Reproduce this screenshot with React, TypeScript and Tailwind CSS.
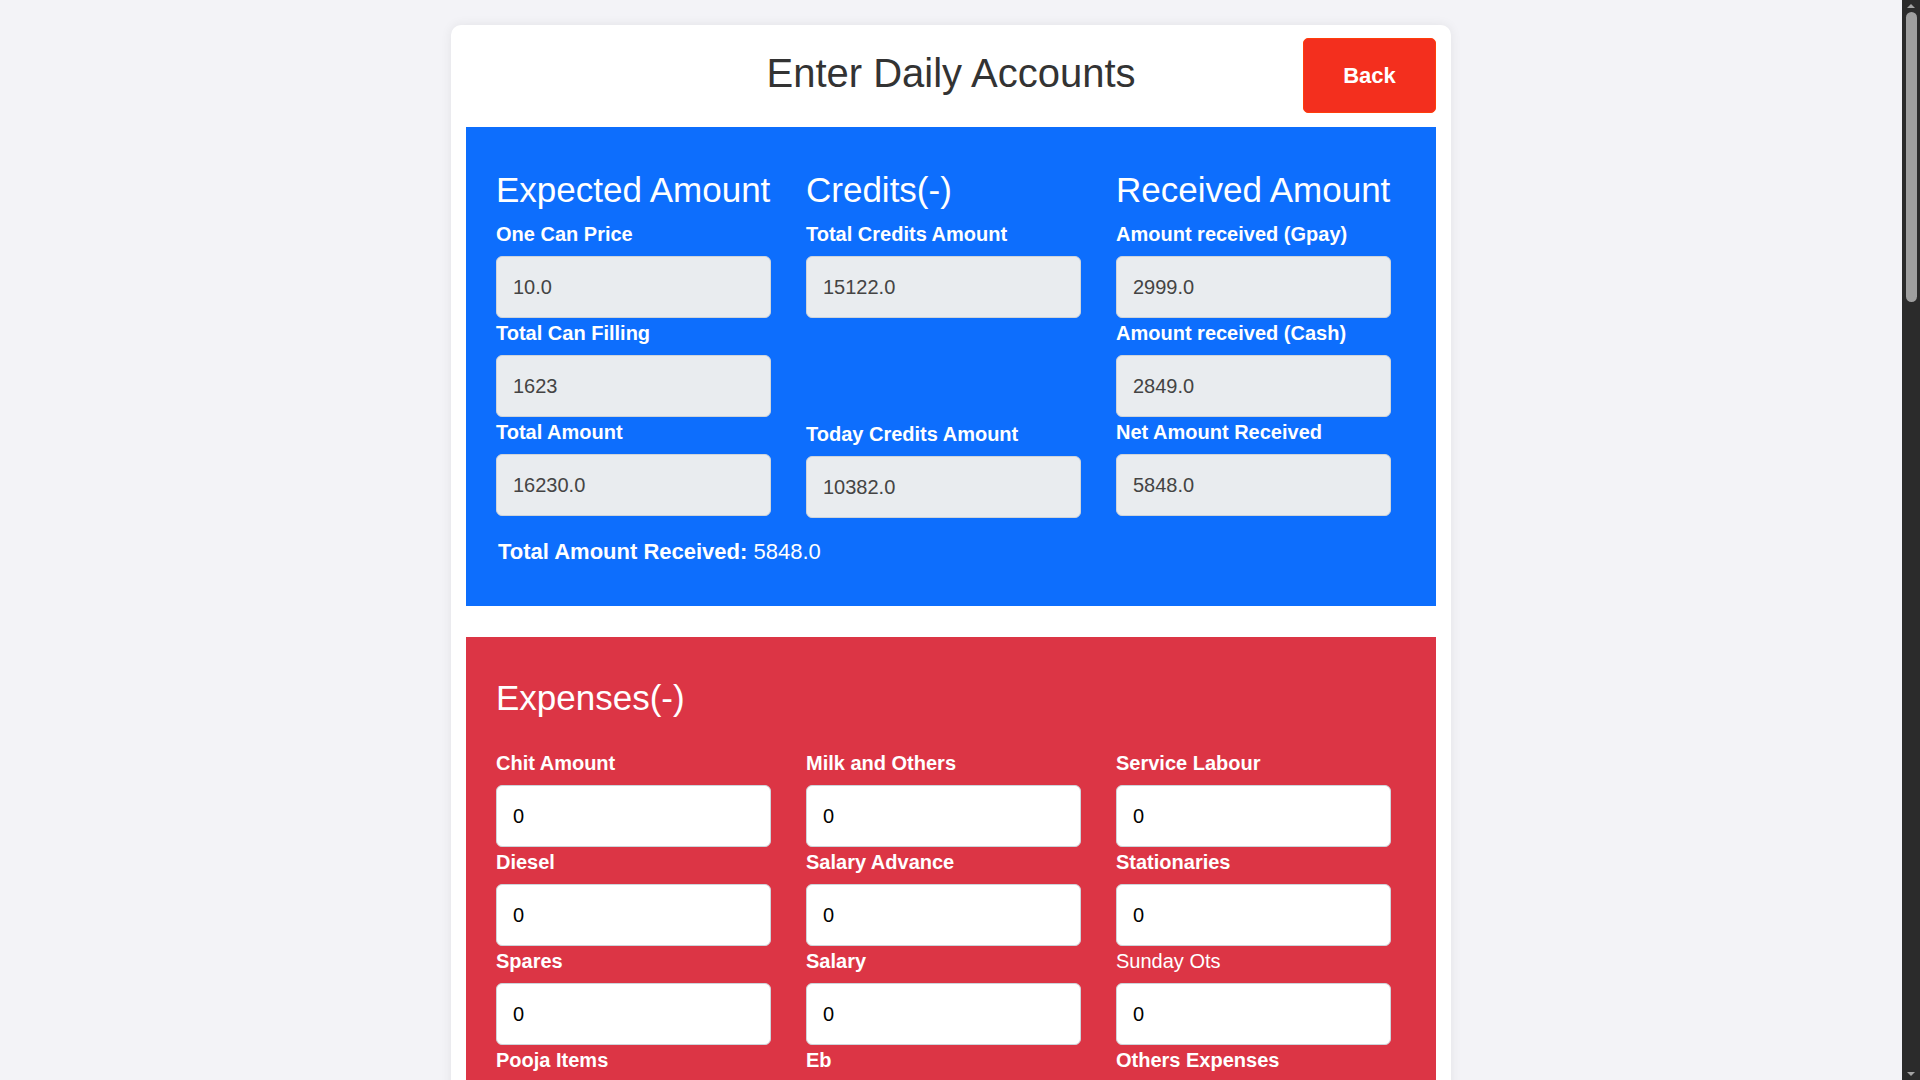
// Daily accounts entry form — expected / credits / received, then expenses.

type Field = { label: string; value: string; plain?: boolean };

const labelCls = "block text-[20px] leading-[30px] font-bold text-white mb-[7px]";
const readOnlyCls =
  "block w-full h-[62px] rounded-[6px] border border-[#ced4da] bg-[#e9ecef] px-4 text-[20px] text-[#444] outline-none";
const editCls =
  "block w-full h-[62px] rounded-[6px] border border-[#ced4da] bg-white px-4 text-[20px] text-black outline-none";

function ReadField({ label, value }: Field) {
  return (
    <div>
      <label className={labelCls}>{label}</label>
      <input className={readOnlyCls} value={value} readOnly />
    </div>
  );
}

function EditField({ label, value, plain }: Field) {
  return (
    <div>
      <label
        className={
          plain
            ? "block text-[20px] leading-[30px] font-normal text-white mb-[7px]"
            : labelCls
        }
      >
        {label}
      </label>
      <input className={editCls} defaultValue={value} />
    </div>
  );
}

const expenses: Field[] = [
  { label: "Chit Amount", value: "0" },
  { label: "Milk and Others", value: "0" },
  { label: "Service Labour", value: "0" },
  { label: "Diesel", value: "0" },
  { label: "Salary Advance", value: "0" },
  { label: "Stationaries", value: "0" },
  { label: "Spares", value: "0" },
  { label: "Salary", value: "0" },
  { label: "Sunday Ots", value: "0", plain: true },
  { label: "Pooja Items", value: "0" },
  { label: "Eb", value: "0" },
  { label: "Others Expenses", value: "0" },
];

function ScrollBar() {
  return (
    <div className="w-[18px] h-screen shrink-0 bg-[#2b2b2b] flex flex-col items-center">
      <svg width="10" height="12" viewBox="0 0 10 12" className="mt-[0px]">
        <path d="M1 8 L5 4 L9 8 Z" fill="#a3a3a3" />
      </svg>
      <div className="w-[11px] h-[290px] rounded-full bg-[#9f9f9f]" />
      <div className="flex-1" />
      <svg width="10" height="12" viewBox="0 0 10 12">
        <path d="M1 4 L5 8 L9 4 Z" fill="#a3a3a3" />
      </svg>
    </div>
  );
}

export default function App() {
  return (
    <div className="flex h-screen overflow-hidden bg-[#f3f3f7] font-['Liberation_Sans',Arial,sans-serif]">
      <main className="flex-1 h-screen overflow-hidden pt-[25px]">
        <div className="mx-auto w-[1000px] rounded-[10px] bg-white px-[15px] pt-[13px] pb-[40px] shadow-[0_0_12px_rgba(0,0,0,0.07)]">
          {/* Header */}
          <div className="grid grid-cols-[1fr_auto_1fr] items-center">
            <div />
            <h1 className="text-[40px] leading-[48px] text-[#333] mb-[5px]">Enter Daily Accounts</h1>
            <button className="justify-self-end w-[133px] h-[75px] rounded-[5px] border border-[#ff3d0a] bg-[#f32f1e] text-[22px] font-bold text-white">
              Back
            </button>
          </div>

          {/* Expected / Credits / Received */}
          <section className="mt-[14px] bg-[#0d6efd] pt-[42px] pb-[38px] pl-[30px]">
            <div className="grid grid-cols-[275px_275px_275px] gap-x-[35px]">
              <div>
                <h2 className="text-[35px] leading-[41px] text-white mb-[9px]">Expected Amount</h2>
                <ReadField label="One Can Price" value="10.0" />
                <ReadField label="Total Can Filling" value="1623" />
                <ReadField label="Total Amount" value="16230.0" />
              </div>
              <div>
                <h2 className="text-[35px] leading-[41px] text-white mb-[9px]">Credits(-)</h2>
                <ReadField label="Total Credits Amount" value="15122.0" />
                <div className="h-[101px]" />
                <ReadField label="Today Credits Amount" value="10382.0" />
              </div>
              <div>
                <h2 className="text-[35px] leading-[41px] text-white mb-[9px]">Received Amount</h2>
                <ReadField label="Amount received (Gpay)" value="2999.0" />
                <ReadField label="Amount received (Cash)" value="2849.0" />
                <ReadField label="Net Amount Received" value="5848.0" />
              </div>
            </div>
            <p className="mt-[17px] ml-[2px] text-[22px] leading-[33px] text-white">
              <b>Total Amount Received:</b> 5848.0
            </p>
          </section>

          {/* Expenses */}
          <section className="mt-[31px] bg-[#dc3545] pt-[40px] pb-[40px] pl-[30px]">
            <h2 className="text-[35px] leading-[42px] text-white mb-[29px]">Expenses(-)</h2>
            <div className="grid grid-cols-[275px_275px_275px] gap-x-[35px]">
              {expenses.map((f) => (
                <EditField key={f.label} {...f} />
              ))}
            </div>
            <p className="mt-[17px] ml-[2px] text-[22px] leading-[33px] text-white">
              <b>Total Expenses:</b> 0
            </p>
          </section>

          <div className="mt-[40px] flex justify-center">
            <button className="w-[240px] h-[75px] rounded-[5px] bg-[#0d6efd] text-[22px] font-bold text-white">
              Submit
            </button>
          </div>
        </div>
      </main>
      <ScrollBar />
    </div>
  );
}
